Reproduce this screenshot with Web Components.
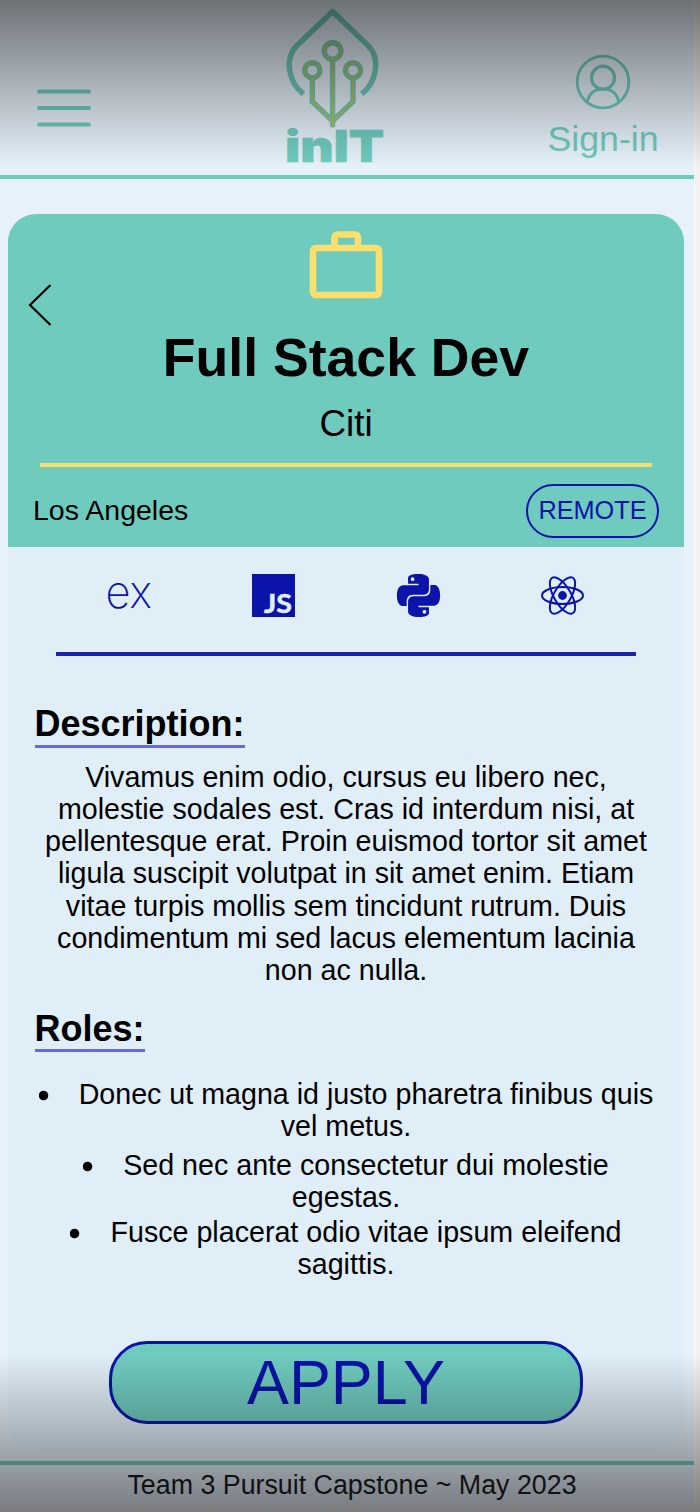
<!DOCTYPE html>
<html lang="en">
<head>
<meta charset="utf-8">
<title>inIT - Full Stack Dev</title>
<style>
  html, body { margin: 0; height: 100%; }
  body { font-family: "Liberation Sans", Arial, sans-serif; background: #f1f1f1; color: #000; overflow: hidden; }
</style>
</head>
<body>
<init-app>
  <init-header slot="header"></init-header>
  <job-card>
    <span slot="title">Full Stack Dev</span>
    <span slot="company">Citi</span>
    <span slot="city">Los Angeles</span>
    <span slot="mode">REMOTE</span>
    <tech-row slot="body"></tech-row>
    <job-section slot="body" style="--top:46.5px;--gap:13px">
      <span slot="heading">Description:</span>
      <job-text>Vivamus enim odio, cursus eu libero nec, molestie sodales est. Cras id interdum nisi, at pellentesque erat. Proin euismod tortor sit amet ligula suscipit volutpat in sit amet enim. Etiam vitae turpis mollis sem tincidunt rutrum. Duis condimentum mi sed lacus elementum lacinia non ac nulla.</job-text>
    </job-section>
    <job-section slot="body" style="--top:21.5px;--gap:26px;--pad:0px">
      <span slot="heading">Roles:</span>
      <job-role style="margin-bottom:7px">Donec ut magna id justo pharetra finibus quis vel metus.</job-role>
      <job-role style="margin-bottom:3px">Sed nec ante consectetur dui molestie egestas.</job-role>
      <job-role>Fusce placerat odio vitae ipsum eleifend sagittis.</job-role>
    </job-section>
    <apply-button slot="body">APPLY</apply-button>
  </job-card>
  <init-footer slot="footer">Team 3 Pursuit Capstone ~ May 2023</init-footer>
</init-app>
<script>
const define = (name, html) => {
  const t = document.createElement('template');
  t.innerHTML = html;
  customElements.define(name, class extends HTMLElement {
    constructor() {
      super();
      this.attachShadow({ mode: 'open' }).append(t.content.cloneNode(true));
    }
  });
};

define('init-app', `
<style>
  :host { display: block; position: relative; width: 700px; height: 1512px; box-sizing: border-box; overflow: hidden;
    --teal: #6fcbbe; --navy: #0b13a8; --gold: #fcdf6f; }
  .page { width: 694px; height: 1506px; background: #e6f1fa; display: flex; flex-direction: column; border-right: 1px solid #fafcfd; }
  main { flex: 1; padding: 35px 10px 0 8px; }
  .shade { position: absolute; left: 0; right: 0; pointer-events: none; }
  .top { top: 0; height: 168px; background: linear-gradient(rgba(0,0,0,.53), rgba(0,0,0,0)); }
  .bottom { bottom: 0; height: 158px; background: linear-gradient(rgba(0,0,0,0), rgba(0,0,0,.49)); }
</style>
<div class="page"><slot name="header"></slot><main><slot></slot></main><slot name="footer"></slot></div>
<div class="shade top"></div><div class="shade bottom"></div>`);

define('init-header', `
<style>
  :host { display: flex; height: 175px; border-bottom: 4px solid var(--teal); padding: 0 36px 0 36px; color: var(--teal); }
  svg { display: block; flex: none; }
  .menu { margin-top: 86px; }
  .logo { margin-left: 178px; }
  .user { display: flex; flex-direction: column; align-items: center; padding-top: 54px; width: 110px; margin-left: auto; }
  .user span { font-size: 35.7px; line-height: 42px; margin-top: 8px; white-space: nowrap; }
</style>
<svg class="menu" width="56" height="44" viewBox="0 0 56 44" fill="none" stroke="currentColor" stroke-width="4" stroke-linecap="round"><path d="M3 5.5h50M3 22h50M3 38.5h50"/></svg>
<svg class="logo" width="130" height="175" viewBox="0 0 130 175">
  <g fill="none" stroke="currentColor">
    <path stroke-width="5.4" stroke-linejoin="round" d="M33.5 94C18 82 14 58 27.5 45L62.6 11.5L97.5 45C111 58 107 82 91.7 94"/>
    <g stroke-width="5.4"><circle cx="62.6" cy="51" r="8.3"/><circle cx="42.3" cy="70.3" r="7.6"/><circle cx="83" cy="70.3" r="7.6"/>
    <path d="M62.6 59v68M42.3 78v23.5L62.6 121L83 101.5V78"/></g>
  </g>
  <g fill="none" stroke="#b3c15e" stroke-width="1.8"><circle cx="62.6" cy="51" r="8.3"/><circle cx="42.3" cy="70.3" r="7.6"/><circle cx="83" cy="70.3" r="7.6"/>
    <path d="M62.6 60v68M42.3 78v23.5L62.6 121L83 101.5V78"/></g>
  <text x="15" y="162" textLength="99" lengthAdjust="spacingAndGlyphs" font-family="Inter, sans-serif" font-weight="900" font-size="44.5" fill="currentColor" stroke="currentColor" stroke-width=".6">inIT</text>
</svg>
<div class="user">
  <svg width="56" height="56" viewBox="0 0 56 56" fill="none" stroke="currentColor"><circle cx="28" cy="28" r="25.8" stroke-width="2.8"/><circle cx="28" cy="23.7" r="11.5" stroke-width="3.2"/><path stroke-width="3" d="M12.3 47.5C14 39.5 20 35 28 35s14 4.5 15.7 12.5"/></svg>
  <span>Sign-in</span>
</div>`);

define('job-card', `
<style>
  :host { display: block; height: 1239px; border-radius: 28px; background: #e0eef8; overflow: hidden; }
  header { height: 333px; box-sizing: border-box; background: var(--teal); display: flex; flex-direction: column; position: relative; text-align: center; }
  .back { position: absolute; left: 19px; top: 69px; }
  .case { display: block; margin: 16px auto 0; }
  h1 { margin: 26px 0 0; font-size: 53.6px; line-height: 62px; font-weight: 700; white-space: nowrap; }
  .company { font-size: 36.8px; line-height: 42px; margin-top: 15px; }
  .rule { height: 4px; background: var(--gold); margin: 17.5px 32px 0; opacity: .95; }
  .meta { display: flex; justify-content: space-between; align-items: center; padding: 0 25px 0 25px; margin-top: 17.5px; }
  .city { font-size: 28.5px; padding-bottom: 2px; }
  .pill { box-sizing: border-box; width: 133px; height: 54px; border: 2px solid var(--navy); border-radius: 27px; color: var(--navy); font-size: 25.3px; line-height: 49px; text-align: center; }
</style>
<header>
  <svg class="back" width="26" height="44" viewBox="0 0 26 44" fill="none" stroke="#000" stroke-width="2.2"><path d="M23.5 2L3 22L23.5 42"/></svg>
  <svg class="case" width="74" height="70" viewBox="0 0 74 70" fill="none" stroke="var(--gold)" stroke-width="6.6" stroke-linejoin="round"><rect x="4" y="18" width="66" height="47" rx="3"/><path d="M25.500 18V8q0-3.500 3.500-3.500h16.500q3.500 0 3.500 3.500V18"/></svg>
  <h1><slot name="title"></slot></h1>
  <div class="company"><slot name="company"></slot></div>
  <div class="rule"></div>
  <div class="meta"><div class="city"><slot name="city"></slot></div><div class="pill"><slot name="mode"></slot></div></div>
</header>
<slot name="body"></slot>`);

define('tech-row', `
<style>
  :host { display: block; margin: 0 48px; height: 109px; }
  .icons { display: flex; justify-content: space-between; padding: 27px 52px 0; height: 43px; color: var(--navy); }
  svg { display: block; overflow: visible; }
  .rule { height: 4px; margin-top: 35px; background: var(--navy); opacity: .93; }
</style>
<div class="icons">
  <svg width="43" height="43" viewBox="0 0 43 43"><text x="-2.5" y="33.500" textLength="46.5" lengthAdjust="spacingAndGlyphs" font-family="Inter, sans-serif" font-weight="200" font-size="45" fill="currentColor">ex</text></svg>
  <svg width="43" height="43" viewBox="0 0 43 43"><path fill="currentColor" d="M0 0h43v43H0z"/><text x="12" y="39" textLength="28" lengthAdjust="spacingAndGlyphs" font-family="Lato, sans-serif" font-weight="700" font-size="26.5" fill="#e0eef8" stroke="#e0eef8" stroke-width=".5">JS</text></svg>
  <svg width="43" height="43" viewBox="0 0 24 24"><path fill="currentColor" d="M14.25.18l.9.2.73.26.59.3.45.32.34.34.25.34.16.33.1.3.04.26.02.2-.01.13V8.5l-.05.63-.13.55-.21.46-.26.38-.3.31-.33.25-.35.19-.35.14-.33.1-.3.07-.26.04-.21.02H8.77l-.69.05-.59.14-.5.22-.41.27-.33.32-.27.35-.2.36-.15.37-.1.35-.07.32-.04.27-.02.21v3.06H3.17l-.21-.03-.28-.07-.32-.12-.35-.18-.36-.26-.36-.36-.35-.46-.32-.59-.28-.73-.21-.88-.14-1.05-.05-1.23.06-1.22.16-1.04.24-.87.32-.71.36-.57.4-.44.42-.33.42-.24.4-.16.36-.1.32-.05.24-.01h.16l.06.01h8.16v-.83H6.18l-.01-2.75-.02-.37.05-.34.11-.31.17-.28.25-.26.31-.23.38-.2.44-.18.51-.15.58-.12.64-.1.71-.06.77-.04.84-.02 1.27.05zm-6.3 1.98l-.23.33-.08.41.08.41.23.34.33.22.41.09.41-.09.33-.22.23-.34.08-.41-.08-.41-.23-.33-.33-.22-.41-.09-.41.09zm13.09 3.95l.28.06.32.12.35.18.36.27.36.35.35.47.32.59.28.73.21.88.14 1.04.05 1.23-.06 1.23-.16 1.04-.24.86-.32.71-.36.57-.4.45-.42.33-.42.24-.4.16-.36.09-.32.05-.24.02-.16-.01h-8.22v.82h5.84l.01 2.76.02.36-.05.34-.11.31-.17.29-.25.25-.31.24-.38.2-.44.17-.51.15-.58.13-.64.09-.71.07-.77.04-.84.01-1.27-.04-1.07-.14-.9-.2-.73-.25-.59-.3-.45-.33-.34-.34-.25-.34-.16-.33-.1-.3-.04-.25-.02-.2.01-.13v-5.34l.05-.64.13-.54.21-.46.26-.38.3-.32.33-.24.35-.2.35-.14.33-.1.3-.06.26-.04.21-.02.13-.01h5.84l.69-.05.59-.14.5-.21.41-.28.33-.32.27-.35.2-.36.15-.36.1-.35.07-.32.04-.28.02-.21V6.07h2.09l.14.01zm-6.47 14.25l-.23.33-.08.41.08.41.23.33.33.23.41.08.41-.08.33-.23.23-.33.08-.41-.08-.41-.23-.33-.33-.23-.41-.08-.41.08z"/></svg>
  <svg width="43" height="43" viewBox="0 0 43 43" fill="none" stroke="currentColor" stroke-width="2"><ellipse cx="21.5" cy="21.5" rx="20.5" ry="8.5"/><ellipse cx="21.5" cy="21.5" rx="20.5" ry="8.5" transform="rotate(60 21.5 21.5)"/><ellipse cx="21.5" cy="21.5" rx="20.5" ry="8.5" transform="rotate(120 21.5 21.5)"/><circle cx="21.5" cy="21.5" r="4.4" fill="currentColor" stroke="none"/></svg>
</div>
<div class="rule"></div>`);

define('job-section', `
<style>
  :host { display: block; padding-top: var(--top); }
  h2 { width: max-content; margin: 0 0 var(--gap) 26.5px; padding-bottom: var(--pad, .5px); font-size: 36px; line-height: 41.5px; font-weight: 700; border-bottom: 3px solid #666ccd; }
</style>
<h2><slot name="heading"></slot></h2><slot></slot>`);

define('job-text', `
<style>
  :host { display: block; width: 612px; margin: 0 auto; text-align: center; font-size: 28.65px; line-height: 32.25px; }
</style><slot></slot>`);

define('job-role', `
<style>
  :host { display: block; width: 621px; margin: 0 auto; text-align: center; font-size: 28.65px; line-height: 32px; }
  i { display: inline-block; width: 40px; height: 18px; background: radial-gradient(circle at 4.5px 9.5px, #000 4.3px, transparent 5.2px); vertical-align: baseline; }
</style><i></i><slot></slot>`);

define('apply-button', `
<style>
  :host { display: block; margin: 60.5px 0 0 101px; }
  button { display: block; width: 474px; height: 83px; padding: 0; box-sizing: border-box; border: 3.5px solid var(--navy); border-radius: 38px; background: var(--teal); color: var(--navy); font: 62.9px/77px "Liberation Sans", Arial, sans-serif; }
</style><button type="button"><slot></slot></button>`);

define('init-footer', `
<style>
  :host { display: block; height: 41px; border-top: 4px solid var(--teal); padding-left: 10px; text-align: center; font-size: 26.8px; line-height: 40px; white-space: nowrap; color: #1c1c1c; }
</style><slot></slot>`);
</script>
</body>
</html>
